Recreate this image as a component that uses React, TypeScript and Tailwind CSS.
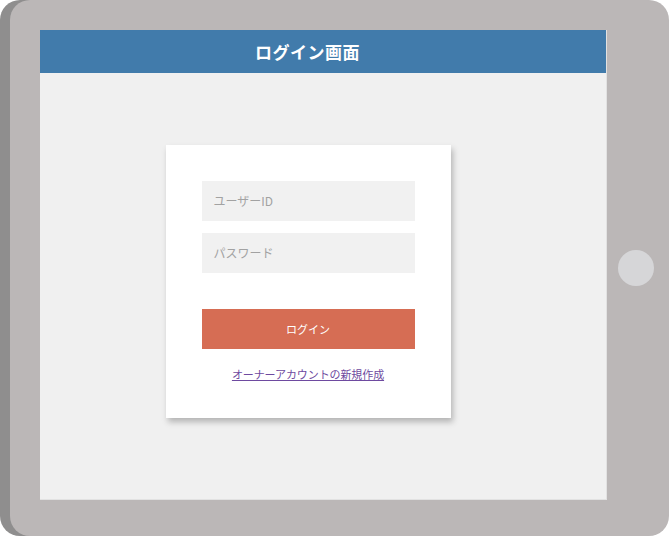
import React from "react";

const font = { fontFamily: '"Noto Sans CJK JP", "Noto Sans", sans-serif' };

export default function App() {
  return (
    <div className="w-[669px] h-[536px] bg-white" style={font}>
      {/* tablet body */}
      <div className="ml-[10px] w-[659px] h-[536px] rounded-[20px] bg-[#bbb7b7] shadow-[-10px_0_0_0_#8f8e8e] flex items-start pt-[30px] pl-[30px] pr-[4px]">
        {/* screen */}
        <div className="w-[567px] h-[470px] bg-[#f0f0f0] flex flex-col border-r border-b border-[#e2e2e2]">
          <div className="h-[43px] bg-[#417bab] flex items-center justify-center pr-[31px]">
            <h1 className="text-white text-[17px] font-bold tracking-[0.5px]">ログイン画面</h1>
          </div>
          <div className="flex-1 flex justify-center pt-[72px] pr-[30px]">
            <div className="w-[285px] h-[273px] bg-white shadow-[2px_4px_6px_rgba(0,0,0,0.25)] px-[36px] pt-[36px] flex flex-col">
              <div className="h-[40px] bg-[#f1f1f1] flex items-center px-[12px] text-[12px] text-[#a2a2a2]">
                ユーザーID
              </div>
              <div className="h-[40px] mt-[12px] bg-[#f1f1f1] flex items-center px-[12px] text-[12px] text-[#a2a2a2]">
                パスワード
              </div>
              <button className="h-[40px] mt-[36px] bg-[#d66d54] text-white text-[11px] flex items-center justify-center">
                ログイン
              </button>
              <div className="mt-[17px] flex justify-center">
                <a href="#" className="text-[11px] text-[#6e4aa0] underline tracking-[-0.1px]">
                  オーナーアカウントの新規作成
                </a>
              </div>
            </div>
          </div>
        </div>
        {/* home button */}
        <div className="flex-1 flex justify-center self-stretch items-center pb-[30px]">
          <div className="w-[36px] h-[36px] rounded-full bg-[#d6d6d8]" />
        </div>
      </div>
    </div>
  );
}
